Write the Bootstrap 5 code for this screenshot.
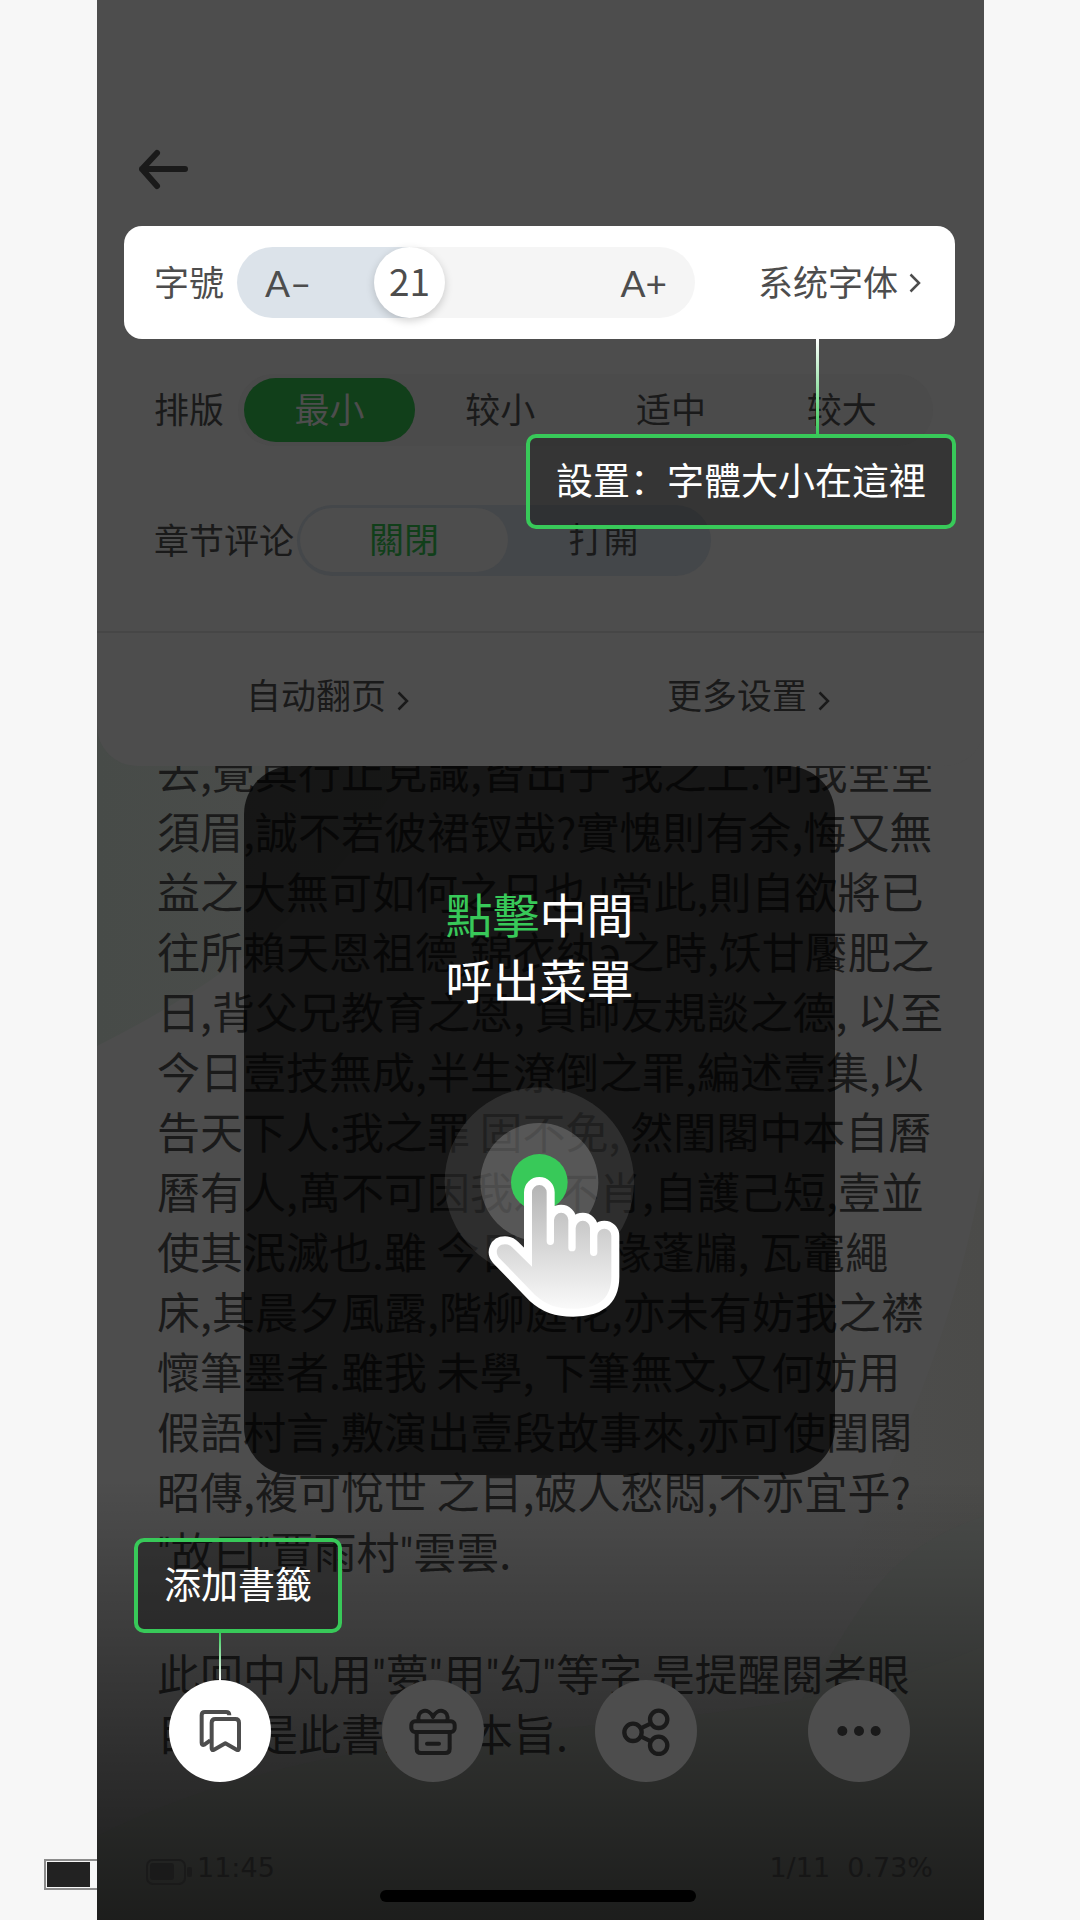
<!DOCTYPE html>
<html lang="zh-Hans">
<head>
<meta charset="utf-8">
<meta name="viewport" content="width=device-width, initial-scale=1">
<title>閱讀設置</title>
<link href="https://cdn.jsdelivr.net/npm/bootstrap@5.3.0/dist/css/bootstrap.min.css" rel="stylesheet">
<style>
body { background: #f7f7f7; font-family: "Noto Sans CJK SC", sans-serif; color: #1a1a1a; font-size: 35px; line-height: 48px; }
a, a:hover { color: inherit; }
.stage { min-height: 100vh; padding: 0 96px 0 97px; overflow: hidden; }
.phone { background: #4d4d4d; min-height: 100vh; }
.side-clip { left: -97px; bottom: 0; width: 97px; height: 100px; overflow: hidden; }
.side-battery { left: 44px; bottom: 30px; width: 60px; height: 31px; border: 2px solid #8c8c8c; padding: 1px; }
.side-battery i { display: block; width: 43px; height: 100%; background: #222; }
.app-head { height: 226px; padding: 144px 40px 0; }
.head-btn { display: block; }
.head-btn svg { display: block; }
.size-card { background: #fff; color: #4d4d4d; margin: 0 29px 0 27px; height: 113px; border-radius: 18px; padding: 0 34px 0 30px; }
.size-card > label, .size-card > a, .set-row > span { padding-bottom: 4px; }
.slider-box { width: 458px; height: 71px; margin-left: 13px; }
.slider-box input { appearance: none; -webkit-appearance: none; display: block; width: 100%; height: 71px; margin: 0; border-radius: 36px; background: linear-gradient(90deg, #dce3ea 38%, #f5f5f5 38%); }
.slider-box input::-webkit-slider-thumb { -webkit-appearance: none; width: 71px; height: 71px; border-radius: 50%; background: #fff; box-shadow: 0 3px 8px rgba(0,0,0,.18); }
.slider-box output { left: 137px; top: 0; width: 71px; font-size: 37px; line-height: 67px; text-align: center; pointer-events: none; }
.step-btn { top: 0; height: 71px; font-family: Lato, "Noto Sans CJK SC", sans-serif; font-size: 37px; color: #4d4d4d; }
.step-down { left: 28px; }
.step-up { right: 28px; }
.chev { width: 12px; height: 20px; flex: none; }
.size-card .chev { margin-top: 4px; }
.go-link { gap: 11px; }
.set-row { margin: 0 51px 0 57px; }
.seg { border-radius: 36px; }
.seg label { border-radius: 32px; cursor: pointer; height: 64px; line-height: 60px; text-align: center; flex: 1 1 0; }
.layout-seg { background: #4b4b4b; height: 72px; padding: 4px 6px; margin-left: 14px; }
.layout-seg input:checked + label { background: #113f1a; color: #4d4d4d; }
.talk-seg { background: #44474a; height: 71px; width: 414px; padding: 3px 12px 3px 3px; margin-left: 3px; }
.talk-seg label:first-of-type { flex: 0 0 208px; }
.talk-seg input:checked + label { background: #4d4d4d; color: #113f1a; }
.row-gap-a { margin-top: 35px; }
.row-gap-b { margin-top: 59px; }
.panel { background: #4d4d4d; border-radius: 0 0 40px 40px; z-index: 1; }
.panel-links { margin-top: 55px; border-top: 2px solid #464646; height: 135px; padding: 0 25px 12px 20px; }
.panel-links .chev { margin-top: 14px; }
.reader { flex: 1 1 auto; min-height: 1154px; margin-top: -40px; padding-top: 40px; }
.tint { left: 0; top: 0; width: 100%; height: 100%; }
.story { font-size: 43px; line-height: 60px; margin: -26px 0 0 60px; white-space: nowrap; }
.story p { margin: 0 0 62px; }
.story b { font-family: Roboto, sans-serif; font-weight: 400; line-height: 0; }
.shade { inset: auto 0 0 0; height: 440px; background: linear-gradient(180deg, rgba(0,0,0,0), rgba(0,0,0,.48) 75%, rgba(0,0,0,.62)); }
.tip-card { top: 40px; left: 147px; right: 149px; height: 709px; border-radius: 48px; background: rgba(0,0,0,.7); padding-top: 114px; color: #fff; font-size: 47px; line-height: 66px; }
.tip-card p { margin: 0 0 58px; }
.hot { color: #38c959; }
.callout { border: 4px solid #38c959; border-radius: 10px; background: rgba(0,0,0,.3); color: #fff; font-size: 37px; line-height: 54px; padding: 14px 26px 19px; white-space: nowrap; }
.callout-font { top: 434px; right: 28px; }
.line-font { top: 339px; right: 165px; width: 3px; height: 95px; background: linear-gradient(#fff, #38c959); }
.callout-mark { bottom: 287px; left: 37px; }
.line-mark { bottom: 240px; left: 122px; width: 2px; height: 47px; background: linear-gradient(#38c959, #fff); }
.tools { bottom: 138px; left: 72px; right: 74px; }
.tool-btn { width: 102px; height: 102px; border-radius: 50%; background: #4d4d4d; color: #1a1a1a; padding: 0; border: 0; }
.tool-btn.lit { background: #fff; color: #4d4d4d; }
.status-bar { bottom: 32px; left: 49px; right: 51px; color: #161616; font-family: "DejaVu Sans", sans-serif; font-size: 27px; line-height: 40px; }
.home-bar { bottom: 18px; left: 283px; right: 288px; height: 12px; border-radius: 6px; background: #000; }
</style>
</head>
<body>
<div class="stage">
<main class="phone position-relative d-flex flex-column">
  <div class="side-clip position-absolute"><div class="side-battery position-absolute"><i></i></div></div>

  <section class="panel position-relative">
    <header class="app-head">
      <button class="btn p-0 border-0 head-btn" type="button" aria-label="返回">
        <svg width="52" height="50" viewBox="0 0 52 50" fill="none" stroke="#1a1a1a" stroke-width="6" stroke-linecap="round" stroke-linejoin="round"><path d="M48 25H5M20 9 5 25 20 42"/></svg>
      </button>
    </header>

    <div class="size-card d-flex align-items-center">
      <label for="size">字號</label>
      <div class="slider-box position-relative">
        <input type="range" id="size" min="10" max="41" value="21">
        <button type="button" class="btn border-0 p-0 step-btn step-down position-absolute">A–</button>
        <output for="size" class="position-absolute">21</output>
        <button type="button" class="btn border-0 p-0 step-btn step-up position-absolute">A+</button>
      </div>
      <a href="#" class="go-link ms-auto text-decoration-none d-flex align-items-center">系统字体
        <svg class="chev" viewBox="0 0 12 20" fill="none" stroke="currentColor" stroke-width="2.500"><path d="M1.500 1.500 10 10 1.500 18.500"/></svg></a>
    </div>

    <div class="set-row row-gap-a d-flex align-items-center">
      <span>排版</span>
      <div class="seg layout-seg d-flex flex-grow-1" role="group" aria-label="排版">
        <input class="btn-check" type="radio" name="lay" id="l1" checked><label for="l1">最小</label>
        <input class="btn-check" type="radio" name="lay" id="l2"><label for="l2">较小</label>
        <input class="btn-check" type="radio" name="lay" id="l3"><label for="l3">适中</label>
        <input class="btn-check" type="radio" name="lay" id="l4"><label for="l4">较大</label>
      </div>
    </div>

    <div class="set-row row-gap-b d-flex align-items-center">
      <span>章节评论</span>
      <div class="seg talk-seg d-flex" role="group" aria-label="章节评论">
        <input class="btn-check" type="radio" name="talk" id="t1" checked><label for="t1">關閉</label>
        <input class="btn-check" type="radio" name="talk" id="t2"><label for="t2">打開</label>
      </div>
    </div>

    <nav class="panel-links d-flex align-items-center">
      <a href="#" class="go-link w-50 text-decoration-none d-flex align-items-center justify-content-center">自动翻页
        <svg class="chev" viewBox="0 0 12 20" fill="none" stroke="currentColor" stroke-width="2.500"><path d="M1.500 1.500 10 10 1.500 18.500"/></svg></a>
      <a href="#" class="go-link w-50 text-decoration-none d-flex align-items-center justify-content-center">更多设置
        <svg class="chev" viewBox="0 0 12 20" fill="none" stroke="currentColor" stroke-width="2.500"><path d="M1.500 1.500 10 10 1.500 18.500"/></svg></a>
    </nav>
  </section>

  <section class="reader position-relative overflow-hidden">
    <svg class="tint position-absolute" viewBox="0 0 887 1194" preserveAspectRatio="none" aria-hidden="true">
      <defs>
        <linearGradient id="tg" x1="0" x2="1" y1="0" y2="0"><stop offset="0" stop-color="#474b48"/><stop offset="1" stop-color="#4d4d4c"/></linearGradient>
        <linearGradient id="tr" x1="0" x2="1" y1="0" y2="0"><stop offset="0" stop-color="#4d4d4d"/><stop offset="1" stop-color="#4b4b49"/></linearGradient>
      </defs>
      <path d="M0 0H330C270 130 180 230 0 320Z" fill="url(#tg)"/>
      <path d="M887 440C850 640 790 740 740 860L887 830Z" fill="url(#tr)"/>
      <path d="M887 790C770 830 760 900 700 980L400 1194H887Z" fill="#4a4c4a"/>
      <path d="M0 1110C300 960 600 1040 887 920V1194H0Z" fill="#4b4d4a"/>
    </svg>
    <article class="story position-relative">
      <p>去,覺其行止見識,皆出于 我之上.何我堂堂<br>須眉,誠不若彼裙钗哉?實愧則有余,悔又無<br>益之大無可如何之日也 !當此,則自欲將已<br>往所賴天恩祖德,錦衣纨э之時,饫甘饜肥之<br>日,背父兄教育之恩, 負師友規談之德, 以至<br>今日壹技無成,半生潦倒之罪,編述壹集,以<br>告天下人:我之罪 固不免, 然閨閣中本自曆<br>曆有人,萬不可因我之不肖,自護己短,壹並<br>使其泯滅也.雖 今日之茅椽蓬牖, 瓦竈繩<br>床,其晨夕風露,階柳庭花,亦未有妨我之襟<br>懷筆墨者.雖我 未學, 下筆無文,又何妨用<br>假語村言,敷演出壹段故事來,亦可使閨閣<br>昭傳,複可悅世 之目,破人愁悶,不亦宜乎?<br><b>"</b>故曰<b>"</b>賈雨村<b>"</b>雲雲.</p>
      <p>此回中凡用<b>"</b>夢<b>"</b>用<b>"</b>幻<b>"</b>等字 是提醒閱者眼<br>目,亦是此書立意本旨.</p>
    </article>
    <div class="shade position-absolute"></div>

    <div class="tip-card position-absolute text-center">
      <p><span class="hot">點擊</span>中間<br>呼出菜單</p>
      <svg class="d-block mx-auto" width="220" height="260" viewBox="0 0 660 780" aria-hidden="true">
        <defs>
          <linearGradient id="hg" gradientUnits="userSpaceOnUse" x1="0" y1="345" x2="0" y2="718"><stop offset="0" stop-color="#b4b4b4"/><stop offset="1" stop-color="#fafafa"/></linearGradient>
          <path id="palm" d="M306 590V367a22 22 0 0 1 44 0V514a11 11 0 0 0 22 0V450a21 21 0 0 1 43 0V533a11 11 0 0 0 22 0V474a21 21 0 0 1 43 0V547a11 11 0 0 0 22 0V497a21 21 0 0 1 42 0V620C544 690 500 716 430 716 380 716 350 706 315 675L207 563C193 546 202 523 225 523Q238 523 248 533Z"/>
        </defs>
        <circle cx="328" cy="336" r="284" fill="#fff" fill-opacity=".1"/>
        <circle cx="328" cy="336" r="177" fill="#fff" fill-opacity=".2"/>
        <circle cx="328" cy="337" r="85" fill="#38c959"/>
        <use href="#palm" fill="none" stroke="#fff" stroke-width="48" stroke-linejoin="round"/>
        <use href="#palm" fill="url(#hg)"/>
      </svg>
    </div>

    <div class="callout callout-mark position-absolute">添加書籤</div>
    <div class="line-mark position-absolute"></div>
    <div class="tools position-absolute d-flex justify-content-between">
      <button class="tool-btn lit d-flex align-items-center justify-content-center" type="button" aria-label="書籤">
        <svg width="50" height="50" viewBox="0 0 150 150" fill="none" stroke="currentColor" stroke-width="12" stroke-linecap="round" stroke-linejoin="round"><path d="M50 50q0-11 11-11H121q11 0 11 11V127q0 8-7 4L91 112 57 131q-7 4-7-4Z"/><path d="M103 28q0-10-10-10H30q-10 0-10 10V110q0 9 8 6L46 103" stroke-linecap="butt"/></svg>
      </button>
      <button class="tool-btn d-flex align-items-center justify-content-center" type="button" aria-label="禮物">
        <svg width="50" height="50" viewBox="0 0 150 150" fill="none" stroke="currentColor" stroke-width="12" stroke-linecap="round" stroke-linejoin="round"><rect x="10" y="46" width="130" height="32" rx="11"/><path d="M26 80V128q0 13 13 13H112q13 0 13-13V80M57 113H93M32 44C26 10 62 4 75 33 88 4 124 10 118 44"/></svg>
      </button>
      <button class="tool-btn d-flex align-items-center justify-content-center" type="button" aria-label="分享">
        <svg width="50" height="50" viewBox="0 0 150 150" fill="none" stroke="currentColor" stroke-width="13"><circle cx="36" cy="79" r="26"/><circle cx="113" cy="40" r="26"/><circle cx="113" cy="118" r="26"/><path d="M59 67 90 52M59 91 90 106"/></svg>
      </button>
      <button class="tool-btn d-flex align-items-center justify-content-center" type="button" aria-label="更多">
        <svg width="50" height="50" viewBox="0 0 150 150" fill="currentColor"><circle cx="25" cy="75" r="15"/><circle cx="75" cy="75" r="15"/><circle cx="125" cy="75" r="15"/></svg>
      </button>
    </div>

    <div class="status-bar position-absolute d-flex align-items-center">
      <svg class="me-1 mt-2" width="47" height="26" viewBox="0 0 47 26" aria-hidden="true"><rect x="1" y="1" width="38" height="24" rx="6" fill="none" stroke="#1a1a1a" stroke-width="2"/><rect x="4" y="4" width="24" height="17" rx="3" fill="#1a1a1a"/><rect x="41" y="8" width="5" height="10" rx="2" fill="#1a1a1a"/></svg>
      <span>11:45</span>
      <span class="ms-auto">1/11&nbsp; 0.73%</span>
    </div>
    <div class="home-bar position-absolute"></div>
  </section>

  <div class="line-font position-absolute z-1"></div>
  <div class="callout callout-font position-absolute z-1">設置：字體大小在這裡</div>
</main>
</div>
<script src="https://cdn.jsdelivr.net/npm/bootstrap@5.3.0/dist/js/bootstrap.bundle.min.js"></script>
</body>
</html>
